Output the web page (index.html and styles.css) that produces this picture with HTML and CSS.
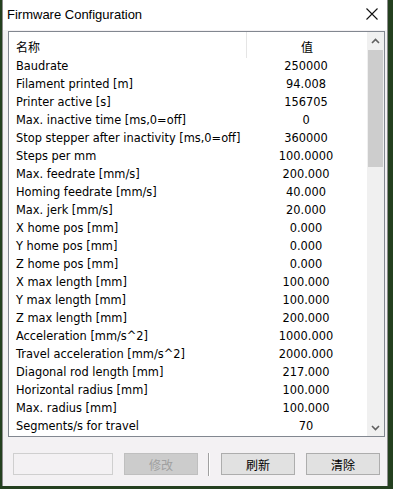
FILE: index.html
```html
<!DOCTYPE html>
<html lang="zh">
<head>
    <meta charset="UTF-8">
    <meta name="viewport" content="width=device-width, initial-scale=1.0">
    <title>Firmware Configuration</title>
    <link rel="stylesheet" href="styles.css">
</head>
<body>
    <div class="window">
        <div class="titlebar">
            <span class="title">Firmware Configuration</span>
            <svg class="close" width="12" height="12" viewBox="0 0 12 12">
                <path d="M0.5 0.5 L11.5 11.5 M11.5 0.5 L0.5 11.5" stroke="#111" stroke-width="1.1" fill="none"/>
            </svg>
        </div>
        <div class="content">
            <div class="listbox">
                <div class="list">
                    <div class="header">
                        <div class="col-name">名称</div>
                        <div class="col-value">值</div>
                    </div>
                    <div id="rows"></div>
                </div>
                <div class="scrollbar">
                    <svg class="arrow" width="9" height="6" viewBox="0 0 9 6">
                        <path d="M1 5 L4.5 1.5 L8 5" stroke="#606060" stroke-width="1.6" fill="none"/>
                    </svg>
                    <div class="track">
                        <div class="thumb"></div>
                    </div>
                    <svg class="arrow" width="9" height="6" viewBox="0 0 9 6">
                        <path d="M1 1 L4.5 4.5 L8 1" stroke="#606060" stroke-width="1.6" fill="none"/>
                    </svg>
                </div>
            </div>
            <div class="buttons">
                <div class="edit"></div>
                <button class="btn btn-edit" disabled>修改</button>
                <div class="sep"></div>
                <button class="btn btn-refresh">刷新</button>
                <button class="btn btn-clear">清除</button>
            </div>
        </div>
    </div>

    <script>
        const settings = [
            ["Baudrate", "250000"],
            ["Filament printed [m]", "94.008"],
            ["Printer active [s]", "156705"],
            ["Max. inactive time [ms,0=off]", "0"],
            ["Stop stepper after inactivity [ms,0=off]", "360000"],
            ["Steps per mm", "100.0000"],
            ["Max. feedrate [mm/s]", "200.000"],
            ["Homing feedrate [mm/s]", "40.000"],
            ["Max. jerk [mm/s]", "20.000"],
            ["X home pos [mm]", "0.000"],
            ["Y home pos [mm]", "0.000"],
            ["Z home pos [mm]", "0.000"],
            ["X max length [mm]", "100.000"],
            ["Y max length [mm]", "100.000"],
            ["Z max length [mm]", "200.000"],
            ["Acceleration [mm/s^2]", "1000.000"],
            ["Travel acceleration [mm/s^2]", "2000.000"],
            ["Diagonal rod length [mm]", "217.000"],
            ["Horizontal radius [mm]", "100.000"],
            ["Max. radius [mm]", "100.000"],
            ["Segments/s for travel", "70"]
        ];

        const rows = document.getElementById("rows");
        settings.forEach(([name, value]) => {
            rows.innerHTML += `<div class="row">
                <div class="col-name">${name}</div>
                <div class="col-value">${value}</div>
            </div>`;
        });
    </script>
</body>
</html>
```

FILE: styles.css
```css
body {
    margin: 0;
    padding: 0;
    width: 393px;
    height: 489px;
    overflow: hidden;
    background-color: #24401f;
    font-family: "DejaVu Sans", "Noto Sans CJK SC", sans-serif;
    font-size: 11.4px;
    color: #000;
}

.window {
    margin-left: 2px;
    width: 386px;
    height: 486px;
    box-sizing: border-box;
    background: #f3f1f3;
    border-left: 1px solid #8c8c8c;
    border-right: 1px solid #8c8c8c;
    display: flex;
    flex-direction: column;
}

.titlebar {
    height: 30px;
    background: #fff;
    display: flex;
    align-items: center;
    justify-content: space-between;
    padding: 0 6px 2px 4px;
    box-sizing: border-box;
}

.title {
    font-size: 13px;
    font-family: "Liberation Sans", "Noto Sans", sans-serif;
}

.close {
    margin-right: 3px;
}

.content {
    padding: 1px 0 0 5px;
}

.listbox {
    width: 377px;
    height: 406px;
    box-sizing: border-box;
    border: 1px solid #828790;
    background: #fff;
    display: flex;
}

.list {
    width: 358px;
}

.header {
    height: 25px;
    display: flex;
    align-items: center;
}

.header .col-name,
.header .col-value {
    font-family: "Noto Sans CJK SC", sans-serif;
    font-size: 12px;
    line-height: 23px;
    height: 23px;
    padding-top: 3px;
}

.header .col-name {
    border-right: 1px solid #e5e5e5;
}

.row {
    height: 18px;
    display: flex;
    align-items: center;
}

.col-name {
    width: 230px;
    padding-left: 7px;
    white-space: nowrap;
}

.col-value {
    width: 120px;
    text-align: center;
}

.scrollbar {
    width: 17px;
    background: #f0f0f0;
    display: flex;
    flex-direction: column;
    align-items: center;
}

.arrow {
    margin: 6px 0 5px;
}

.track {
    flex: 1;
    width: 100%;
}

.thumb {
    margin: 1px 1px 0;
    height: 117px;
    background: #cdcdcd;
}

.buttons {
    margin-top: 16px;
    display: flex;
    align-items: center;
    height: 22px;
}

.edit {
    width: 100px;
    height: 22px;
    box-sizing: border-box;
    border: 1px solid #cfcfcf;
    margin-left: 5px;
}

.btn {
    width: 74px;
    height: 22px;
    padding: 0;
    margin: 0;
    box-sizing: border-box;
    background: #e1e1e1;
    border: 1px solid #adadad;
    font-family: "Noto Sans CJK SC", sans-serif;
    font-size: 12px;
    color: #000;
}

.btn:disabled {
    background: #cccccc;
    border-color: #bfbfbf;
    color: #a0a0a0;
}

.btn-edit {
    margin-left: 11px;
}

.btn-refresh {
    margin-left: 11px;
}

.btn-clear {
    margin-left: 11px;
}

.sep {
    width: 1px;
    height: 23px;
    background: #a0a0a0;
    border-right: 1px solid #fff;
    margin-left: 10px;
}
```
